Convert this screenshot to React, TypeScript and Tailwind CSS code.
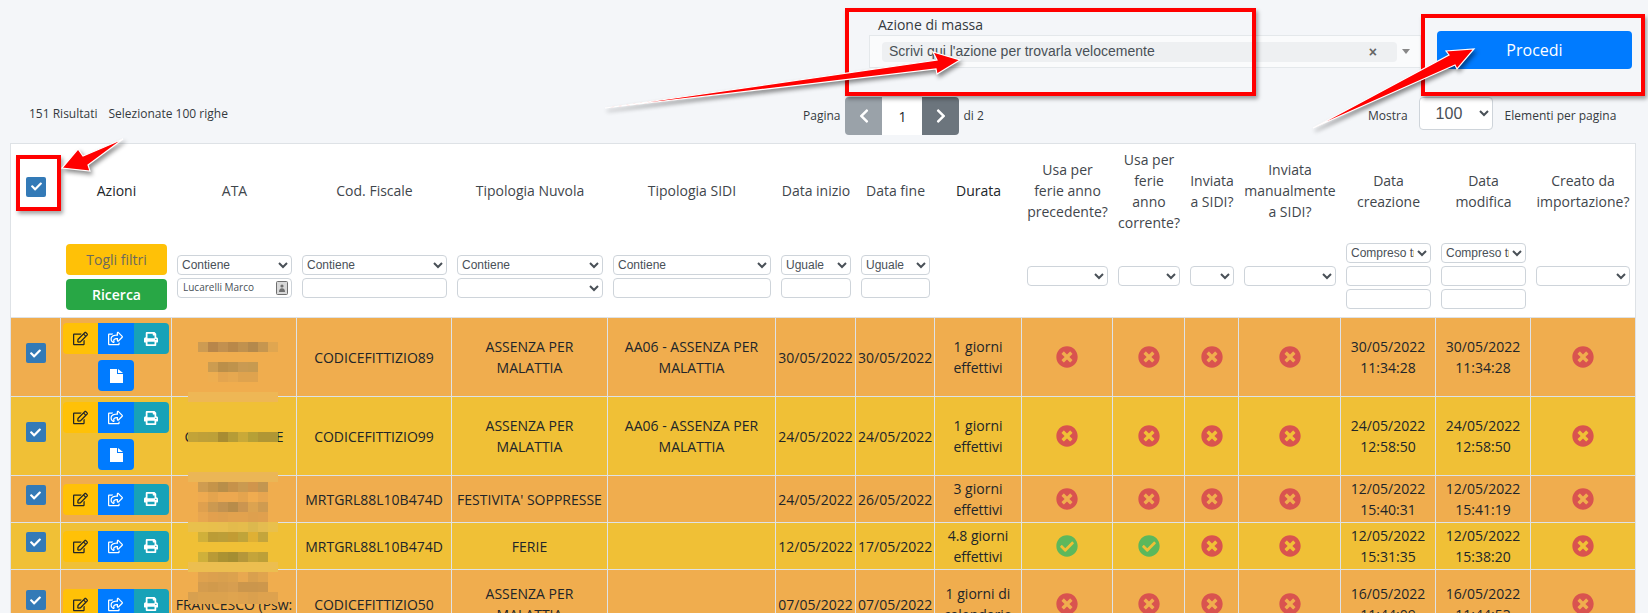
import { FaCheck, FaCheckCircle, FaChevronLeft, FaChevronRight, FaPrint, FaRegEdit, FaRegShareSquare, FaTimesCircle } from "react-icons/fa";

type Filter = "select-input" | "select" | "range";

interface Column {
    label: string;
    width: string;
    strong?: boolean;
    filter?: Filter;
}

interface Row {
    height: string;
    bg: string;
    ata: React.ReactNode;
    cf: string;
    nuvola: string;
    sidi: string;
    start: string;
    end: string;
    durata: string;
    flags: boolean[];
    created: string;
    modified: string;
    extraButton?: boolean;
}

const columns: Column[] = [
    { label: "", width: "w-[50px]" },
    { label: "Azioni", width: "w-[111px]", strong: true },
    { label: "ATA", width: "w-[125px]", filter: "select-input" },
    { label: "Cod. Fiscale", width: "w-[155px]", filter: "select-input" },
    { label: "Tipologia Nuvola", width: "w-[156px]", filter: "select-input" },
    { label: "Tipologia SIDI", width: "w-[168px]", filter: "select-input" },
    { label: "Data inizio", width: "w-[80px]", filter: "select-input" },
    { label: "Data fine", width: "w-[79px]", filter: "select-input" },
    { label: "Durata", width: "w-[87px]", strong: true },
    { label: "Usa per\nferie anno\nprecedente?", width: "w-[91px]", filter: "select" },
    { label: "Usa per\nferie\nanno\ncorrente?", width: "w-[72px]", filter: "select" },
    { label: "Inviata\na SIDI?", width: "w-[54px]", filter: "select" },
    { label: "Inviata\nmanualmente\na SIDI?", width: "w-[102px]", filter: "select" },
    { label: "Data\ncreazione", width: "w-[95px]", filter: "range" },
    { label: "Data\nmodifica", width: "w-[95px]", filter: "range" },
    { label: "Creato da\nimportazione?", width: "w-[104px]", filter: "select" },
];

const orange = "bg-[#f0ad4e]";
const yellow = "bg-[#f0c036]";

const rows: Row[] = [
    {
        height: "h-[79px]", bg: orange, ata: "", cf: "CODICEFITTIZIO89", nuvola: "ASSENZA PER MALATTIA",
        sidi: "AA06 - ASSENZA PER MALATTIA", start: "30/05/2022", end: "30/05/2022", durata: "1 giorni effettivi",
        flags: [false, false, false, false, false], created: "30/05/2022 11:34:28", modified: "30/05/2022 11:34:28", extraButton: true,
    },
    {
        height: "h-[79px]", bg: yellow,
        ata: (
            <div className="mx-auto flex w-[99px] justify-between">
                <span>C</span>
                <span>E</span>
            </div>
        ),
        cf: "CODICEFITTIZIO99", nuvola: "ASSENZA PER MALATTIA",
        sidi: "AA06 - ASSENZA PER MALATTIA", start: "24/05/2022", end: "24/05/2022", durata: "1 giorni effettivi",
        flags: [false, false, false, false, false], created: "24/05/2022 12:58:50", modified: "24/05/2022 12:58:50", extraButton: true,
    },
    {
        height: "h-[47px]", bg: orange, ata: "", cf: "MRTGRL88L10B474D", nuvola: "FESTIVITA' SOPPRESSE",
        sidi: "", start: "24/05/2022", end: "26/05/2022", durata: "3 giorni effettivi",
        flags: [false, false, false, false, false], created: "12/05/2022 15:40:31", modified: "12/05/2022 15:41:19",
    },
    {
        height: "h-[47px]", bg: yellow, ata: "", cf: "MRTGRL88L10B474D", nuvola: "FERIE",
        sidi: "", start: "12/05/2022", end: "17/05/2022", durata: "4.8 giorni effettivi",
        flags: [true, true, false, false, false], created: "12/05/2022 15:31:35", modified: "12/05/2022 15:38:20",
    },
    {
        height: "h-[69px]", bg: orange, ata: <span className="whitespace-nowrap">FRANCESCO (Psw:</span>, cf: "CODICEFITTIZIO50", nuvola: "ASSENZA PER MALATTIA",
        sidi: "", start: "07/05/2022", end: "07/05/2022", durata: "1 giorni di calendario",
        flags: [false, false, false, false, false], created: "16/05/2022 11:44:09", modified: "16/05/2022 11:44:53",
    },
];

// the censored names: [y, height, x of first cell, colours]
const mosaic: [number, number, number, string[]][] = [
    [342, 10, 198, ["#cd9b52", "#b8864a", "#c2904f", "#b98849", "#c0914e", "#b4894c", "#c6964f", "#e0a650"]],
    [362, 10, 208, ["#cc9c50", "#bb8f49", "#bf934c", "#c99a52", "#c79a50"]],
    [372, 10, 208, ["#eeae50", "#e4a54f", "#e6a850", "#dfa34e", "#dfa34e"]],
    [392, 10, 188, ["#eeb755", "#eeb755", "#eeb755", "#eeb755", "#eeb755", "#eeb755", "#eeb755", "#eeb755", "#eeb755"]],
    [432, 10, 188, ["#c2a338", "#bfa038", "#bda038", "#a88c32", "#b69c36", "#c9a938", "#b6a036", "#b09634", "#b09634"]],
    [472, 10, 188, ["#ebb656", "#ebb656", "#ebb656", "#ebb656", "#ebb656", "#ebb656", "#ebb656", "#ebb656", "#ebb656"]],
    [482, 10, 198, ["#cf9c50", "#c59449", "#b88e49", "#c6924a", "#ca9a50", "#d0954c", "#c39650"]],
    [492, 10, 198, ["#eeaa50", "#e4a44e", "#eca850", "#eca850", "#e4a44e", "#f0ac50", "#e8a650"]],
    [502, 10, 198, ["#dfa04e", "#cc9950", "#c29250", "#b88c4a", "#cb9550", "#dca350", "#cf9b50"]],
    [512, 10, 198, ["#e8a650", "#e2a04e", "#dfa04e", "#e2a24e", "#e2a24e", "#dea04e", "#e0a04e"]],
    [522, 10, 188, ["#e9c04c", "#e9c04c", "#e8bf4c", "#e8be4e", "#e3bb4c", "#e5bc4c", "#dcb84e", "#e4bc50", "#e9c04c"]],
    [532, 10, 198, ["#d0b03a", "#bb9c36", "#bc9e38", "#c29c34", "#c0a43a", "#dfb034", "#c4a53c"]],
    [552, 10, 198, ["#cfb03a", "#b99a36", "#ab9232", "#a58e32", "#b5973a", "#c4a43a", "#bda038"]],
    [562, 10, 188, ["#ecbe50", "#ecbe50", "#ecbe50", "#ecbe50", "#ecbe50", "#ecbe50", "#ecbe50", "#ecbe50", "#ecbe50"]],
    [572, 10, 198, ["#dfa24e", "#dca04e", "#d9a04e", "#dca24e", "#e8a850", "#d9a04e", "#e0a44e"]],
    [582, 10, 198, ["#d49c4e", "#d19a4c", "#d49c4e", "#d79e50", "#cb964c", "#cb964c", "#cd974c"]],
    [592, 12, 188, ["#d8a04f", "#dca24e", "#dca24e", "#dca24e", "#dfa44f", "#dea24e", "#daa04e", "#dea24e", "#dea24e"]],
];

const arrows = [
    "605,108 937,60 933,52 960,60 937,74 936,69",
    "1313,128 1449,55 1446,51 1474,49 1457,69 1455,65",
    "123,139 83,156 78,149 62,168 90,171 88,165",
];

const controlClass = "block h-5 w-full rounded border border-[#ced4da] bg-white text-[12px] text-[#495057]";

function Select({ value = "" }: { value?: string }) {
    return (
        <select className={`${controlClass} font-['Liberation_Sans',sans-serif]`} defaultValue={value}>
            <option value={value}>{value}</option>
        </select>
    );
}

function TextInput() {
    return <input className={`${controlClass} px-1`} />;
}

function CheckBox() {
    return (
        <div className="mx-auto mb-2 flex h-5 w-5 items-center justify-center rounded-[2px] bg-[#337ab7]">
            <FaCheck className="h-[11px] w-[11px] text-white" />
        </div>
    );
}

function ContactIcon() {
    return (
        <svg viewBox="0 0 12 14" className="absolute right-[4px] top-[3px] h-[14px] w-[12px]">
            <rect x="0.5" y="0.5" width="11" height="13" rx="1" fill="#d8d8d8" stroke="#6f6f6f" />
            <circle cx="6" cy="5" r="1.6" fill="#6f6f6f" />
            <path d="M3 11 C3 8 4.5 7.2 6 7.2 C7.5 7.2 9 8 9 11 Z" fill="#6f6f6f" />
        </svg>
    );
}

function FilterCell({ filter, index }: { filter?: Filter; index: number }) {
    if (filter === "select") {
        return <Select />;
    }
    if (filter === "range") {
        return (
            <div className="flex flex-col gap-[3px]">
                <Select value="Compreso tra" />
                <TextInput />
                <TextInput />
            </div>
        );
    }
    if (filter === "select-input") {
        const label = index === 6 || index === 7 ? "Uguale" : "Contiene";
        return (
            <div className="flex flex-col gap-[3px]">
                <Select value={label} />
                {index === 2 ? (
                    <div className="relative">
                        <input className={`${controlClass} pl-[5px] !text-[10px]`} defaultValue="Lucarelli Marco" />
                        <ContactIcon />
                    </div>
                ) : index === 4 ? (
                    <Select />
                ) : (
                    <TextInput />
                )}
            </div>
        );
    }
    return null;
}

function ActionButtons({ extra }: { extra?: boolean }) {
    return (
        <div className="mx-auto flex w-[106px] flex-wrap justify-center gap-y-[6px]">
            <div className="flex h-[31px] w-[106px] overflow-hidden rounded">
                <div className="flex flex-1 items-center justify-center bg-[#ffc107] text-[#212529]">
                    <FaRegEdit className="h-[15px] w-[15px]" />
                </div>
                <div className="flex flex-1 items-center justify-center bg-[#007bff] text-white">
                    <FaRegShareSquare className="h-[15px] w-[15px]" />
                </div>
                <div className="flex flex-1 items-center justify-center bg-[#17a2b8] text-white">
                    <FaPrint className="h-[14px] w-[14px]" />
                </div>
            </div>
            {extra && (
                <div className="flex h-[31px] w-9 items-center justify-center rounded bg-[#007bff]">
                    <svg viewBox="0 0 13 14" className="h-[14px] w-[13px]" fill="white">
                        <path d="M0 0 H7 V5 H13 V14 H0 Z" />
                        <path d="M8 0 L13 4 H8 Z" />
                    </svg>
                </div>
            )}
        </div>
    );
}

function Flag({ ok }: { ok: boolean }) {
    return ok ? (
        <FaCheckCircle className="mx-auto h-[22px] w-[22px] text-[#5cb85c]" />
    ) : (
        <FaTimesCircle className="mx-auto h-[22px] w-[22px] text-[#d9534f]" />
    );
}

const cellClass = "border-b border-r border-[#dee2e6] px-[3px] text-center align-middle";

function DataRow({ row }: { row: Row }) {
    const textCells = [row.cf, row.nuvola, row.sidi, row.start, row.end, row.durata];
    return (
        <tr className={row.bg}>
            <td className={`${cellClass} ${row.height} !px-0`}>
                <CheckBox />
            </td>
            <td className={`${cellClass} !px-0`}>
                <ActionButtons extra={row.extraButton} />
            </td>
            <td className={`${cellClass} !px-0`}>{row.ata}</td>
            {textCells.map((text, i) => (
                <td key={i} className={`${cellClass} !px-[2px]`}>
                    {text}
                </td>
            ))}
            {row.flags.slice(0, 4).map((ok, i) => (
                <td key={i} className={cellClass}>
                    <Flag ok={ok} />
                </td>
            ))}
            <td className={cellClass}>{row.created}</td>
            <td className={cellClass}>{row.modified}</td>
            <td className="border-b border-[#dee2e6] text-center align-middle">
                <Flag ok={row.flags[4]} />
            </td>
        </tr>
    );
}

function DataTable() {
    return (
        <div className="ml-[10px] w-[1626px] border border-b-0 border-[#dee2e6] bg-white">
            <table className="w-[1624px] table-fixed border-separate border-spacing-0 text-[14px] leading-[21px] text-[#212529]">
                <colgroup>
                    {columns.map((c, i) => (
                        <col key={i} className={c.width} />
                    ))}
                </colgroup>
                <thead>
                    <tr>
                        {columns.map((c, i) => (
                            <th
                                key={i}
                                className={`h-[96px] whitespace-pre-line px-0 pb-[3px] text-center align-middle ${
                                    c.strong ? "font-medium text-[#212529]" : "font-normal text-[#3f464c]"
                                }`}
                            >
                                {i === 0 ? <CheckBox /> : c.label}
                            </th>
                        ))}
                    </tr>
                    <tr>
                        {columns.map((c, i) => (
                            <td key={i} className="h-[78px] border-b border-[#dee2e6] px-[5px] pb-[5px] align-middle">
                                {i === 1 ? (
                                    <div className="mt-[2px] flex flex-col gap-1">
                                        <div className="flex h-[31px] items-center justify-center rounded bg-[#ffc107] font-medium text-[#6c6a5e]">
                                            Togli filtri
                                        </div>
                                        <div className="flex h-[31px] items-center justify-center rounded bg-[#28a745] font-semibold text-white">
                                            Ricerca
                                        </div>
                                    </div>
                                ) : (
                                    <FilterCell filter={c.filter} index={i} />
                                )}
                            </td>
                        ))}
                    </tr>
                </thead>
                <tbody>
                    {rows.map((row, i) => (
                        <DataRow key={i} row={row} />
                    ))}
                </tbody>
            </table>
        </div>
    );
}

function Toolbar() {
    return (
        <>
            <div className="flex h-[97px] justify-end gap-4 pr-4">
                <div className="w-[552px] pt-[14px]">
                    <div className="pl-[9px] text-[14px] font-medium leading-[21px] text-[#343a40]">Azione di massa</div>
                    <div className="flex h-[33px] items-center border border-[#e4e8eb] bg-[#fafbfc] pl-3 pr-[10px]">
                        <div className="flex h-5 flex-1 items-center justify-between rounded bg-[#eef0f2] pl-[7px] pr-[20px] font-['Liberation_Sans',sans-serif] text-[14px] text-[#495057]">
                            <span>Scrivi qui l'azione per trovarla velocemente</span>
                            <span className="text-[14px] font-bold leading-none text-[#666]">×</span>
                        </div>
                        <svg viewBox="0 0 8 5" className="ml-[5px] h-[5px] w-[8px]">
                            <path d="M0 0 H8 L4 5 Z" fill="#888" />
                        </svg>
                    </div>
                </div>
                <button className="mt-[31px] flex h-[38px] w-[195px] items-center justify-center rounded bg-[#007bff] text-[16px] text-white">
                    Procedi
                </button>
            </div>
            <div className="flex h-[46px] items-start pl-[29px] text-[12px] text-[#343a40]">
                <div className="flex h-[34px] w-[774px] items-center gap-[11px]">
                    <span>151 Risultati</span>
                    <span>Selezionate 100 righe</span>
                </div>
                <div className="flex h-[38px] w-[565px] items-center">
                    <span className="mr-[5px]">Pagina</span>
                    <div className="flex h-[38px] overflow-hidden rounded">
                        <div className="flex w-[37px] items-center justify-center bg-[#9aa2a9] text-white">
                            <FaChevronLeft className="h-4 w-4" />
                        </div>
                        <div className="flex w-10 items-center justify-center bg-white text-[14px] text-[#212529]">1</div>
                        <div className="flex w-[37px] items-center justify-center bg-[#6c757d] text-white">
                            <FaChevronRight className="h-4 w-4" />
                        </div>
                    </div>
                    <span className="ml-[4px]">di 2</span>
                </div>
                <div className="flex h-[38px] items-center">
                    <span className="mr-[11px]">Mostra</span>
                    <select className="mb-[5px] h-[33px] w-[74px] rounded border border-[#ced4da] bg-white pl-3 font-['Liberation_Sans',sans-serif] text-[16px] text-[#495057]" defaultValue="100">
                        <option value="100">100</option>
                    </select>
                    <span className="ml-3">Elementi per pagina</span>
                </div>
            </div>
        </>
    );
}

function Annotations() {
    return (
        <>
            <div className="absolute left-[845px] top-[8px] h-[88px] w-[411px] border-4 border-[#f00] shadow-[2px_3px_4px_rgba(0,0,0,0.35)]" />
            <div className="absolute left-[1421px] top-[14px] h-[82px] w-[224px] border-4 border-[#f00] shadow-[2px_3px_4px_rgba(0,0,0,0.35)]" />
            <div className="absolute left-[16px] top-[155px] h-[56px] w-[45px] border-4 border-[#f00] shadow-[2px_3px_4px_rgba(0,0,0,0.35)]" />
            <svg viewBox="0 0 1648 613" className="absolute left-0 top-0 h-[613px] w-[1648px] drop-shadow-[2px_3px_2px_rgba(0,0,0,0.45)]">
                {arrows.map((points) => (
                    <polygon key={points} points={points} fill="#f00" stroke="#fff" strokeWidth="1.2" />
                ))}
            </svg>
        </>
    );
}

function Mosaic() {
    return (
        <svg viewBox="0 0 1648 613" shapeRendering="crispEdges" className="absolute left-0 top-0 h-[613px] w-[1648px]">
            {mosaic.map(([y, h, x, colours]) =>
                colours.map((fill, i) => <rect key={`${y}-${i}`} x={x + i * 10} y={y} width="10" height={h} fill={fill} />)
            )}
        </svg>
    );
}

export default function App() {
    return (
        <div className="relative h-[613px] w-[1648px] overflow-hidden bg-[#f4f6f9] font-['Open_Sans',sans-serif]">
            <Toolbar />
            <DataTable />
            <Mosaic />
            <Annotations />
        </div>
    );
}
